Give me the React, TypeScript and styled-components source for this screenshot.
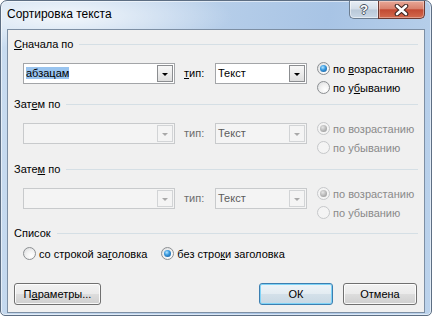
import React from 'react';
import styled, { createGlobalStyle, css } from 'styled-components';

const GlobalStyle = createGlobalStyle`
  html, body {
    margin: 0;
    padding: 0;
    background: #ffffff;
  }
  body {
    font-family: 'Liberation Sans', Arial, sans-serif;
    font-size: 11px;
    color: #000;
  }
`;

const App: React.FC = () => {
  return (
    <>
      <GlobalStyle />
      <Window>
        <TitleBar>
          <Title>Сортировка текста</Title>
          <CaptionButtons>
            <HelpButton>
              <HelpGlyph>?</HelpGlyph>
            </HelpButton>
            <CloseButton>
              <svg width="15" height="12" viewBox="0 0 15 12">
                <path d="M3 2 L12 10 M12 2 L3 10" stroke="#3b2320" strokeWidth="4.6" strokeLinecap="round" />
                <path d="M3 2 L12 10 M12 2 L3 10" stroke="#ffffff" strokeWidth="2.6" strokeLinecap="round" />
              </svg>
            </CloseButton>
          </CaptionButtons>
        </TitleBar>

        <Client>
          <Section $top={8}>
            <GroupHeader>
              <span>
                <Key>С</Key>начала по
              </span>
              <Rule />
            </GroupHeader>
            <SortRow>
              <Combo $width={152}>
                <ComboText>
                  <Selected>абзацам</Selected>
                </ComboText>
                <DropButton>
                  <Arrow />
                </DropButton>
              </Combo>
              <TypeLabel>
                <Key>т</Key>ип:
              </TypeLabel>
              <Combo $width={92}>
                <ComboText>Текст</ComboText>
                <DropButton>
                  <Arrow />
                </DropButton>
              </Combo>
              <RadioGroup>
                <RadioOption>
                  <RadioDot $checked />
                  <span>
                    по <Key>в</Key>озрастанию
                  </span>
                </RadioOption>
                <RadioOption>
                  <RadioDot />
                  <span>
                    по у<Key>б</Key>ыванию
                  </span>
                </RadioOption>
              </RadioGroup>
            </SortRow>
          </Section>

          <Section $top={1}>
            <GroupHeader>
              <span>
                Зат<Key>е</Key>м по
              </span>
              <Rule />
            </GroupHeader>
            <DisabledSortRow />
          </Section>

          <Section $top={6}>
            <GroupHeader>
              <span>
                Зате<Key>м</Key> по
              </span>
              <Rule />
            </GroupHeader>
            <DisabledSortRow />
          </Section>

          <Section $top={5}>
            <GroupHeader>
              <span>Список</span>
              <Rule />
            </GroupHeader>
            <ListRow>
              <RadioOption>
                <RadioDot />
                <span>
                  со строкой за<Key>г</Key>оловка
                </span>
              </RadioOption>
              <RadioOption>
                <RadioDot $checked />
                <span>
                  без стро<Key>к</Key>и заголовка
                </span>
              </RadioOption>
            </ListRow>
          </Section>

          <ButtonRow>
            <PushButton $width={87}>
              П<Key>а</Key>раметры...
            </PushButton>
            <Spacer />
            <PushButton $width={74} $default>
              ОК
            </PushButton>
            <PushButton $width={74}>Отмена</PushButton>
          </ButtonRow>
        </Client>
      </Window>
    </>
  );
};

const DisabledSortRow: React.FC = () => (
  <SortRow>
    <Combo $width={152} $disabled>
      <ComboText />
      <DropButton $disabled>
        <Arrow $disabled />
      </DropButton>
    </Combo>
    <TypeLabel $disabled>тип:</TypeLabel>
    <Combo $width={92} $disabled>
      <ComboText $disabled>Текст</ComboText>
      <DropButton $disabled>
        <Arrow $disabled />
      </DropButton>
    </Combo>
    <RadioGroup>
      <RadioOption $disabled>
        <RadioDot $checked $disabled />
        <span>по возрастанию</span>
      </RadioOption>
      <RadioOption $disabled>
        <RadioDot $disabled />
        <span>по убыванию</span>
      </RadioOption>
    </RadioGroup>
  </SortRow>
);

const Window = styled.div`
  box-sizing: border-box;
  width: 432px;
  height: 316px;
  display: flex;
  flex-direction: column;
  padding: 0 6px 2px;
  border: 1px solid #5d6e83;
  border-radius: 7px 7px 5px 5px;
  background: radial-gradient(
      ellipse 170px 34px at 62px 15px,
      rgba(255, 255, 255, 0.8),
      rgba(255, 255, 255, 0) 100%
    ),
    linear-gradient(100deg, #c9dcf0 0%, #b9d0ea 40%, #a8c4e5 68%, #bcd3ec 100%);
  box-shadow: inset 0 0 0 1px rgba(255, 255, 255, 0.55);
`;

const TitleBar = styled.div`
  height: 28px;
  display: flex;
  justify-content: space-between;
  align-items: flex-start;
`;

const Title = styled.div`
  margin-top: 6px;
  font-size: 12px;
  line-height: 15px;
  color: #000;
`;

const CaptionButtons = styled.div`
  display: flex;
  height: 18px;
`;

const HelpButton = styled.div`
  box-sizing: border-box;
  width: 29px;
  height: 18px;
  display: flex;
  align-items: center;
  justify-content: center;
  border: 1px solid #6c7d90;
  border-top: none;
  border-right: none;
  border-radius: 0 0 0 5px;
  background: linear-gradient(#e7eef5 0%, #d3dde8 48%, #b9c8d8 52%, #c9d7e6 100%);
  box-shadow: inset 0 0 0 1px rgba(255, 255, 255, 0.5);
`;

const HelpGlyph = styled.span`
  font-family: 'Liberation Sans', Arial, sans-serif;
  font-weight: bold;
  font-size: 13px;
  line-height: 13px;
  color: #ffffff;
  text-shadow: 1px 0 0 #4a5563, -1px 0 0 #4a5563, 0 1px 0 #4a5563, 0 -1px 0 #4a5563;
`;

const CloseButton = styled.div`
  box-sizing: border-box;
  width: 47px;
  height: 18px;
  display: flex;
  align-items: center;
  justify-content: center;
  border: 1px solid #6b3a33;
  border-top: none;
  border-radius: 0 0 5px 0;
  background: linear-gradient(#e8a898 0%, #d9826e 45%, #c24a33 52%, #d36a4e 100%);
  box-shadow: inset 0 0 0 1px rgba(255, 255, 255, 0.35);
`;

const Client = styled.div`
  flex: 1;
  display: flex;
  flex-direction: column;
  padding: 0 6px;
  border: 1px solid #7d8fa4;
  background: #f0f0f0;
`;

const Section = styled.div<{ $top: number }>`
  display: flex;
  flex-direction: column;
  margin-top: ${(p) => p.$top}px;
`;

const GroupHeader = styled.div`
  height: 13px;
  line-height: 13px;
  display: flex;
  align-items: center;
  gap: 6px;
  white-space: nowrap;
`;

const Rule = styled.div`
  flex: 1;
  height: 1px;
  background: #d5dfe5;
`;

const Key = styled.span`
  text-decoration: underline;
`;

const SortRow = styled.div`
  height: 34px;
  margin-top: 12px;
  padding-left: 9px;
  display: flex;
  align-items: flex-start;
`;

const Combo = styled.div<{ $width: number; $disabled?: boolean }>`
  box-sizing: border-box;
  flex: none;
  width: ${(p) => p.$width}px;
  height: 21px;
  display: flex;
  padding: 1px;
  border: 1px solid ${(p) => (p.$disabled ? '#c8cacc' : '#a3a5a8')};
  background: ${(p) => (p.$disabled ? '#f4f4f4' : '#ffffff')};
`;

const ComboText = styled.div<{ $disabled?: boolean }>`
  flex: 1;
  padding-left: 1px;
  line-height: 17px;
  white-space: nowrap;
  color: ${(p) => (p.$disabled ? '#5c5c5c' : '#000')};
`;

const Selected = styled.span`
  background: #99c4ef;
`;

const DropButton = styled.div<{ $disabled?: boolean }>`
  box-sizing: border-box;
  width: 16px;
  display: flex;
  align-items: center;
  justify-content: center;
  padding-top: 1px;
  border: 1px solid ${(p) => (p.$disabled ? '#d2d4d6' : '#8b8d90')};
  background: ${(p) =>
    p.$disabled ? '#f4f4f4' : 'linear-gradient(#f7f7f7 0%, #ececec 50%, #dedede 100%)'};
`;

const Arrow = styled.span<{ $disabled?: boolean }>`
  width: 0;
  height: 0;
  border-left: 3px solid transparent;
  border-right: 3px solid transparent;
  border-top: 3px solid ${(p) => (p.$disabled ? '#a9a9a9' : '#000')};
`;

const TypeLabel = styled.div<{ $disabled?: boolean }>`
  flex: none;
  width: 31px;
  margin-left: 9px;
  line-height: 21px;
  color: ${(p) => (p.$disabled ? '#6d6d6d' : '#000')};
`;

const RadioGroup = styled.div`
  margin-left: 10px;
  margin-top: -4px;
  display: flex;
  flex-direction: column;
`;

const RadioOption = styled.div<{ $disabled?: boolean }>`
  height: 19px;
  display: flex;
  align-items: center;
  gap: 3px;
  white-space: nowrap;
  color: ${(p) => (p.$disabled ? '#8a8a8a' : '#000')};
`;

const RadioDot = styled.span<{ $checked?: boolean; $disabled?: boolean }>`
  box-sizing: border-box;
  position: relative;
  flex: none;
  width: 13px;
  height: 13px;
  border-radius: 50%;
  border: 1px solid ${(p) => (p.$disabled ? '#c6c8ca' : '#8c8f92')};
  background: ${(p) =>
    p.$disabled
      ? '#f4f4f4'
      : 'radial-gradient(circle at 65% 70%, #ffffff 0%, #f2f2f2 45%, #d6d8da 100%)'};
  ${(p) =>
    p.$checked &&
    css`
      &::after {
        content: '';
        position: absolute;
        left: 2px;
        top: 2px;
        width: 7px;
        height: 7px;
        border-radius: 50%;
        background: ${p.$disabled
          ? 'radial-gradient(circle at 40% 35%, #e6e6e6 0%, #b4b4b4 55%, #8f8f8f 100%)'
          : 'radial-gradient(circle at 40% 35%, #b6e6ff 0%, #3b9be0 40%, #0d4f8e 100%)'};
      }
    `}
`;

const ListRow = styled.div`
  height: 19px;
  margin-top: 4px;
  padding-left: 9px;
  display: flex;
  align-items: center;
  gap: 14px;
`;

const ButtonRow = styled.div`
  margin-top: 20px;
  padding-right: 1px;
  display: flex;
  gap: 10px;
`;

const Spacer = styled.div`
  flex: 1;
`;

const PushButton = styled.button<{ $width: number; $default?: boolean }>`
  box-sizing: border-box;
  width: ${(p) => p.$width}px;
  height: 22px;
  padding: 0;
  font-family: inherit;
  font-size: 11px;
  color: #000;
  border: 1px solid #707070;
  border-radius: 3px;
  background: linear-gradient(#f2f2f2 0%, #ebebeb 48%, #dddddd 52%, #cfcfcf 100%);
  box-shadow: inset 0 0 0 1px rgba(255, 255, 255, 0.85);

  ${(p) =>
    p.$default &&
    css`
      border-color: #3c7fb1;
      background: linear-gradient(#eef4f8 0%, #e3ecf2 48%, #d3e0e9 52%, #c8d8e4 100%);
      box-shadow: inset 0 0 0 1px #7fd3f7;
    `}
`;

export default App;
